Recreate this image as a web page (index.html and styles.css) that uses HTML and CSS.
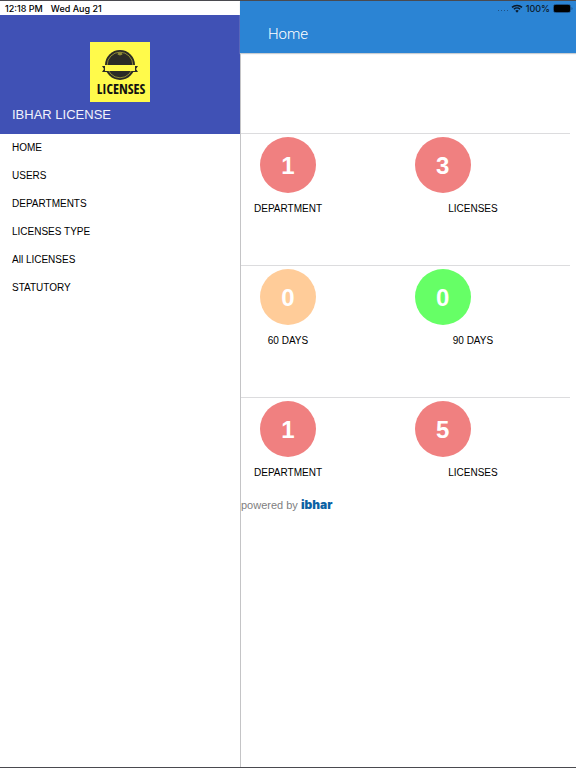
FILE: index.html
```html
<!DOCTYPE html>
<html lang="en">
<head>
  <meta charset="UTF-8" />
  <meta name="viewport" content="width=device-width, initial-scale=1.0"/>
  <title>Home</title>
  <link rel="stylesheet" href="styles.css">
</head>
<body>

  <div class="app">
    <aside class="sidebar">
      <div class="status">
        <span>12:18 PM</span>
        <span>Wed Aug 21</span>
      </div>

      <div class="brand">
        <svg class="logo" viewBox="0 0 60 60" role="img" aria-label="Licenses">
          <rect width="60" height="60" fill="#fffa4b"/>
          <circle cx="30" cy="23" r="15" fill="#2b2b26"/>
          <circle cx="30" cy="23" r="12.8" fill="none" stroke="#b5b13c" stroke-width="0.7"/>
          <path d="M28.500 10.500h3l1 2-2.500 1-2.500-1z" fill="#8f8c35"/>
          <path d="M12 24h6v6h-6l2-3zM48 24h-6v6h6l-2-3z" fill="#2b2b26"/>
          <rect x="15" y="23" width="30" height="6" fill="#fffa4b"/>
          <text class="logo-text" x="31" y="52" text-anchor="middle">LICENSES</text>
        </svg>
        <h2>IBHAR LICENSE</h2>
      </div>

      <nav class="menu">
        <a href="#home">HOME</a>
        <a href="#users">USERS</a>
        <a href="#departments">DEPARTMENTS</a>
        <a href="#types">LICENSES TYPE</a>
        <a href="#licenses">All LICENSES</a>
        <a href="#statutory">STATUTORY</a>
      </nav>
    </aside>

    <main class="content">
      <header class="topbar">
        <div class="status status-right">
          <span class="signal"><i></i><i></i><i></i><i></i></span>
          <svg class="wifi" viewBox="0 0 12 9">
            <path d="M1 3.4a7.2 7.2 0 0 1 10 0M2.9 5.3a4.5 4.5 0 0 1 6.2 0" fill="none" stroke="#0b1a2a" stroke-width="1.5"/>
            <path d="M4.3 6.8a2.5 2.5 0 0 1 3.4 0L6 8.7z" fill="#0b1a2a"/>
          </svg>
          <span>100%</span>
          <svg class="battery" viewBox="0 0 20 9">
            <rect x="0.5" y="0.5" width="17" height="8" rx="2" fill="none" stroke="#1d5288"/>
            <rect x="1" y="1" width="16" height="7" rx="1" fill="#000"/>
            <path d="M18.5 3v3q1-.5 1-1.5t-1-1.5z" fill="#1d5288"/>
          </svg>
        </div>
        <h1>Home</h1>
      </header>

      <section class="stats">
        <div class="row">
          <div class="stat">
            <div class="circle red">1</div>
            <p>DEPARTMENT</p>
          </div>
          <div class="stat wide">
            <div class="circle red">3</div>
            <p>LICENSES</p>
          </div>
        </div>
        <div class="row">
          <div class="stat">
            <div class="circle orange">0</div>
            <p>60 DAYS</p>
          </div>
          <div class="stat wide">
            <div class="circle green">0</div>
            <p>90 DAYS</p>
          </div>
        </div>
        <div class="row last">
          <div class="stat">
            <div class="circle red">1</div>
            <p>DEPARTMENT</p>
          </div>
          <div class="stat wide">
            <div class="circle red">5</div>
            <p>LICENSES</p>
          </div>
        </div>
      </section>

      <footer class="powered">powered by <b>ibhar</b></footer>
    </main>
  </div>

</body>
</html>
```

FILE: styles.css
```css
* {
  box-sizing: border-box;
}

body {
  margin: 0;
  font-family: "Liberation Sans", Arial, sans-serif;
  font-size: 10px;
  color: #000;
  background: white;
}

h1, h2, p {
  margin: 0;
  font-weight: normal;
}

.app {
  display: flex;
  min-height: 100vh;
  border-top: 1px solid #4a4a4f;
  border-bottom: 1px solid #4a4a4f;
}

.sidebar {
  flex: 0 0 241px;
  border-right: 1px solid #c4c4c6;
}

.status {
  display: flex;
  align-items: center;
  gap: 8px;
  height: 14px;
  padding: 0 5px;
  font-family: Inter, sans-serif;
  font-size: 9px;
  font-weight: 500;
}

.brand {
  padding: 27px 12px 11px;
  background: #4051b5;
  color: #f2f3fb;
}

.logo {
  display: block;
  width: 60px;
  height: 60px;
  margin: 0 auto 4px;
}

.logo-text {
  font-family: "Liberation Sans Narrow", "Open Sans Condensed", "Liberation Sans", sans-serif;
  font-size: 14px;
  font-weight: 700;
  fill: #111;
}

.brand h2 {
  font-size: 13px;
  line-height: 17px;
}

.menu a {
  display: block;
  padding: 0 12px;
  line-height: 28px;
  color: #000;
  text-decoration: none;
}

.content {
  flex: 1;
  min-width: 0;
}

.topbar {
  height: 52px;
  margin-left: -1px;
  background: #2b84d4;
  box-shadow: 0 1px 1px #c8cdd2;
}

.status-right {
  justify-content: flex-end;
  gap: 3px;
  padding: 0 3px;
  color: #0b1a2a;
}

.signal {
  display: flex;
  gap: 2px;
  padding-top: 4px;
}

.signal i {
  width: 1px;
  height: 1px;
  background: #1d5288;
}

.wifi {
  width: 12px;
  height: 9px;
}

.battery {
  width: 20px;
  height: 9px;
}

.topbar h1 {
  padding-left: 28px;
  font-family: Roboto, sans-serif;
  font-size: 15px;
  font-weight: 300;
  line-height: 38px;
  color: white;
}

.stats {
  padding: 80px 6px 0 0;
}

.row {
  display: grid;
  grid-template-columns: 47% 47%;
  min-height: 132px;
  padding-top: 3px;
  border-top: 1px solid #dcdcde;
}

.last {
  min-height: 98px;
}

.circle {
  width: 56px;
  height: 56px;
  margin-left: 19px;
  border-radius: 50%;
  color: white;
  font-size: 24px;
  font-weight: bold;
  line-height: 58px;
  text-align: center;
}

.red {
  background: #f08080;
}

.orange {
  background: #ffcc99;
}

.green {
  background: #66ff66;
}

.stat p {
  width: 94px;
  margin-top: 8px;
  line-height: 16px;
  text-align: center;
}

.wide p {
  width: 100%;
}

.powered {
  font-size: 11px;
  line-height: 20px;
  color: #808080;
}

.powered b {
  font-family: Inter, sans-serif;
  font-size: 12px;
  font-weight: 900;
  color: #0b62a4;
}
```
